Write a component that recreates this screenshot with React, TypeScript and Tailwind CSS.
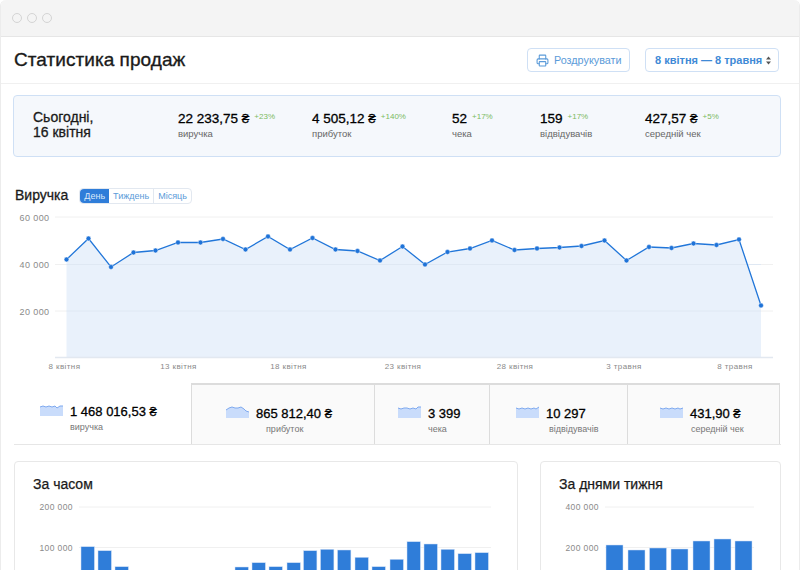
import React from 'react';
import { Printer } from 'lucide-react';

// Щоденні дані графіка (x, y у пікселях сторінки)
const linePoints: [number, number][] = [
  [66.5, 258.5], [88.5, 237.5], [111, 266], [133.5, 251.5], [155.5, 249.5], [178, 241.5], [200.5, 241.5], [223, 238], [245.5, 248.5], [268, 235.5], [290, 248.5], [312.5, 237], [335.5, 248.5], [357.5, 250], [380, 259.5], [402.5, 245.5],
  [425, 263.5], [447.5, 251], [470, 247.5], [492, 239.5], [514.5, 249], [537, 247.5], [559.5, 246.5], [581.5, 245], [604.5, 239.5], [626.5, 259.5], [649, 246], [671.5, 247], [693.5, 242.5], [716.5, 244], [739, 238.5], [761, 304.5],
];

const xLabels: [number, string][] = [
  [64.5, '8 квітня'], [178.5, '13 квітня'], [288.5, '18 квітня'], [403, '23 квітня'], [515, '28 квітня'], [624, '3 травня'], [735, '8 травня'],
];

const today = [
  { value: '22 233,75 ₴', delta: '+23%', label: 'виручка', width: 'w-[134px]' },
  { value: '4 505,12 ₴', delta: '+140%', label: 'прибуток', width: 'w-[140px]' },
  { value: '52', delta: '+17%', label: 'чека', width: 'w-[88px]' },
  { value: '159', delta: '+17%', label: 'відвідувачів', width: 'w-[105px]' },
  { value: '427,57 ₴', delta: '+5%', label: 'середній чек', width: 'w-[120px]' },
];

const totals = [
  { value: '1 468 016,53 ₴', label: 'виручка', cell: 'w-[177px] pl-[26px] bg-white', offset: 'ml-0', spark: '0,3 3,2 6,3 9,2 12,3 15,2 17,4 20,2 23,2' },
  { value: '865 812,40 ₴', label: 'прибуток', cell: 'w-[183px] pl-[34px] bg-[#fafafa] border-t-2 border-l border-[#dcdcdc]', offset: 'ml-[10px]', spark: '0,4 3,2 6,1 9,2 12,2 15,1 18,3 20,5 23,6' },
  { value: '3 399', label: 'чека', cell: 'w-[115px] pl-[23px] bg-[#fafafa] border-t-2 border-l border-[#dcdcdc]', offset: 'ml-0', spark: '0,2 3,3 6,2 9,2 12,3 15,2 18,3 20,1 23,1' },
  { value: '10 297', label: 'відвідувачів', cell: 'w-[138px] pl-[26px] bg-[#fafafa] border-t-2 border-l border-[#dcdcdc]', offset: 'ml-[3px]', spark: '0,2 3,3 6,2 9,3 12,2 15,3 18,2 20,3 23,1' },
  { value: '431,90 ₴', label: 'середній чек', cell: 'w-[153px] pl-[32px] bg-[#fafafa] border-t-2 border-l border-r border-[#dcdcdc]', offset: 'ml-px', spark: '0,2 3,3 6,2 9,3 12,2 15,3 18,2 20,3 23,2' },
];

// Верхній край стовпчиків
const hourBars: [number, number][] = [
  [81, 546.7], [98, 550.7], [115, 566.7], [235, 567], [252, 562.7], [269, 566.7], [287, 562.7], [303.5, 550.7], [320.5, 549.3], [337.5, 550], [355, 557.3], [372, 566.7], [390, 559.3], [407, 541.7], [424, 544], [441, 549.3], [458, 553.7], [475, 552.7],
];
const weekBars: [number, number][] = [
  [606, 545], [628, 550], [649.5, 548], [671, 549], [693, 541], [714, 539], [735, 541],
];

const Sparkline = ({ points }: { points: string }) => (
  <svg width="23" height="12" viewBox="0 0 23 12" className="shrink-0 mt-px">
    <polygon points={`0,12 ${points} 23,12`} fill="#c9dcfb" />
    <polyline points={points} fill="none" stroke="#7ea9ef" strokeWidth="1" />
  </svg>
);

const RevenueChart = () => {
  const line = linePoints.map(p => p.join(',')).join(' ');
  return (
    <svg viewBox="14 208 768 167" className="block w-[768px] h-[167px]">
      {[216, 263.5, 310].map(y => (
        <line key={y} x1="55" x2="773" y1={y} y2={y} stroke="#f0f0f0" />
      ))}
      <polygon points={`66.5,356 ${line} 761,356`} fill="#e9f1fb" />
      {[263.5, 310].map(y => (
        <line key={y} x1="66.5" x2="761" y1={y} y2={y} stroke="#dfe8f3" />
      ))}
      <line x1="55" x2="773" y1="356.5" y2="356.5" stroke="#e2e8f0" strokeWidth="1.5" />
      <polyline points={line} fill="none" stroke="#2176d9" strokeWidth="1.3" />
      {linePoints.map(([x, y]) => (
        <circle key={x} cx={x} cy={y} r="2.4" fill="#1f73d8" stroke="#ffffff" strokeWidth="0.4" />
      ))}
      {[[216, '60 000'], [263, '40 000'], [310, '20 000']].map(([y, t]) => (
        <text key={t} x="49.5" y={Number(y) + 3.5} textAnchor="end" fontSize="9" letterSpacing="0.4" fill="#8a8a8a">{t}</text>
      ))}
      {xLabels.map(([x, t]) => (
        <text key={t} x={x} y="367.5" textAnchor="middle" fontSize="8" letterSpacing="0.4" fill="#8a8a8a">{t}</text>
      ))}
    </svg>
  );
};

const BarChart = ({ bars, barWidth, labels, x0, x1, labelX, left, width }: {
  bars: [number, number][]; barWidth: number; labels: string[]; x0: number; x1: number; labelX: number; left: number; width: number;
}) => (
  <svg viewBox={`${left} 500 ${width} 100`} width={width} height="100" className="block">
    {[507, 547.5].map((y, i) => (
      <g key={y}>
        <line x1={x0} x2={x1} y1={y} y2={y} stroke="#f0f0f0" />
        <text x={labelX} y={y + 3} textAnchor="end" fontSize="8.5" letterSpacing="0.4" fill="#8a8a8a">{labels[i]}</text>
      </g>
    ))}
    {bars.map(([x, top]) => (
      <rect key={x} x={x} y={top} width={barWidth} height={600 - top} fill="#2f7dd9" stroke="#cfe0f5" strokeWidth="0.5" />
    ))}
  </svg>
);

const App: React.FC = () => {
  return (
    <div className="w-[800px] h-[570px] overflow-hidden bg-white text-[#1a1a1a] font-['Liberation_Sans',sans-serif]">
      <div className="h-[570px] rounded-t-md border-x border-[#ececec] overflow-hidden">
        {/* Рядок вікна */}
        <div className="flex items-center gap-[5px] h-[37px] pl-[11px] bg-[#f4f4f4] border-b border-[#e6e6e6]">
          <span className="w-[10px] h-[10px] rounded-full border border-[#d4d4d4]" />
          <span className="w-[10px] h-[10px] rounded-full border border-[#d4d4d4]" />
          <span className="w-[10px] h-[10px] rounded-full border border-[#d4d4d4]" />
        </div>

        {/* Заголовок */}
        <div className="flex items-center h-[47px] pl-[13px] pr-5 border-b border-[#f0f0f0]">
          <h1 className="mb-[2px] text-[19px] leading-none tracking-[0.05px] [-webkit-text-stroke:0.35px]">Статистика продаж</h1>
          <button className="flex items-center gap-[5px] ml-auto w-[103px] h-6 pl-2 border border-[#cfe0f5] rounded text-[10.8px] text-[#5b9bd9]">
            <Printer size={13} strokeWidth={2} />
            Роздрукувати
          </button>
          <button className="flex items-center justify-between w-[134px] h-6 ml-[15px] pl-[9px] pr-[7px] border border-[#cfe0f5] rounded text-[11px] font-bold text-[#3f8ad6]">
            8 квітня — 8 травня
            <svg width="5" height="9" viewBox="0 0 5 9" fill="#555555">
              <path d="M2.5 0.5 5 3.5H0z" />
              <path d="M2.5 8.5 0 5.5h5z" />
            </svg>
          </button>
        </div>

        {/* Сьогодні */}
        <div className="flex items-center w-[768px] h-[62px] mt-[11px] ml-3 pb-[2px] pl-[19px] bg-[#f5f8fc] border border-[#cfe0f5] rounded">
          <div className="w-[145px] text-sm leading-[15px] [-webkit-text-stroke:0.3px]">
            Сьогодні,<br />16 квітня
          </div>
          {today.map(item => (
            <div key={item.label} className={item.width}>
              <div className="flex items-start gap-[5px]">
                <span className="text-[13.5px] leading-[17px] text-black [-webkit-text-stroke:0.3px]">{item.value}</span>
                <span className="text-[8px] leading-[13px] text-[#7cbb5f]">{item.delta}</span>
              </div>
              <div className="mt-px text-[9.5px] leading-3 text-[#666666]">{item.label}</div>
            </div>
          ))}
        </div>

        {/* Виручка */}
        <div className="flex items-center gap-[11px] h-4 mt-[31px] ml-[14px]">
          <h2 className="mb-[2px] text-sm [-webkit-text-stroke:0.3px]">Виручка</h2>
          <div className="flex h-4 border border-[#e2e8f0] rounded-sm text-[9px] leading-[14px] text-[#5b9bd9]">
            <span className="px-1 bg-[#2f7dd9] text-[#dbe9f9] rounded-l-sm">День</span>
            <span className="px-1 border-r border-[#e2e8f0]">Тиждень</span>
            <span className="px-1">Місяць</span>
          </div>
        </div>
        <div className="mt-[5px] ml-[13px]">
          <RevenueChart />
        </div>

        {/* Підсумки */}
        <div className="flex w-[767px] h-[62px] mt-[7px] ml-[13px] border-b border-[#e6e6e6]">
          {totals.map(item => (
            <div key={item.label} className={`flex items-start pt-5 gap-[7px] ${item.cell}`}>
              <Sparkline points={item.spark} />
              <div>
                <div className="text-[13px] leading-[17px] text-black whitespace-nowrap [-webkit-text-stroke:0.3px]">{item.value}</div>
                <div className={`mt-[2px] text-[9px] leading-[10px] text-[#777777] whitespace-nowrap ${item.offset}`}>{item.label}</div>
              </div>
            </div>
          ))}
        </div>

        {/* Нижні картки */}
        <div className="flex gap-[22px] mt-4 ml-[13px]">
          <div className="w-[504px] h-[200px] pt-[13px] border border-[#e8e8e8] rounded">
            <h3 className="ml-[18px] h-[18px] mb-[7px] text-sm leading-[18px] [-webkit-text-stroke:0.25px]">За часом</h3>
            <BarChart bars={hourBars} barWidth={13.4} labels={['200 000', '100 000']} x0={79} x1={491} labelX={73} left={15} width={502} />
          </div>
          <div className="w-[241px] h-[200px] pt-[13px] border border-[#e8e8e8] rounded">
            <h3 className="ml-[18px] h-[18px] mb-[7px] text-sm leading-[18px] [-webkit-text-stroke:0.25px]">За днями тижня</h3>
            <BarChart bars={weekBars} barWidth={17} labels={['400 000', '200 000']} x0={605} x1={754} labelX={599} left={541} width={239} />
          </div>
        </div>
      </div>
    </div>
  );
};

export default App;
